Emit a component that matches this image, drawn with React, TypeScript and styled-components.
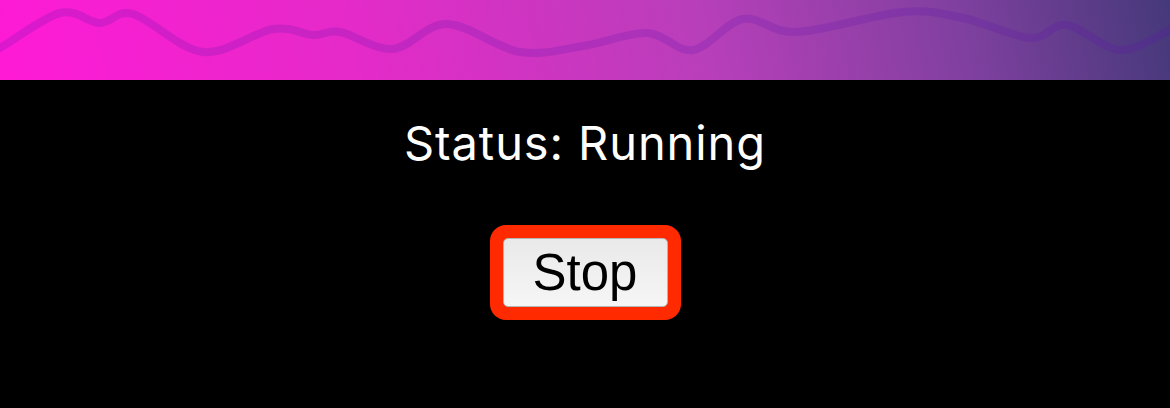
import React from "react";
import styled, { createGlobalStyle } from "styled-components";

const GlobalStyle = createGlobalStyle`
  html, body {
    margin: 0;
    padding: 0;
    background: #000;
  }
  body {
    font-family: Inter, "Noto Sans", sans-serif;
  }
`;

const Page = styled.div`
  width: 1170px;
  height: 408px;
  background: #000;
  display: flex;
  flex-direction: column;
  overflow: hidden;
`;

const Header = styled.header`
  height: 80px;
  flex: 0 0 80px;
  background: linear-gradient(78deg, #ff1ad6 0%, #e52ac9 30%, #b83fba 60%, #7f409f 82%, #45397a 100%);
  overflow: hidden;
`;

const Wave = styled.svg`
  display: block;
  width: 1170px;
  height: 80px;
`;

const Main = styled.main`
  display: flex;
  flex-direction: column;
  align-items: center;
  padding-top: 36px;
`;

const Status = styled.div`
  color: #fff;
  font-family: Inter, "Noto Sans", sans-serif;
  font-size: 47px;
  letter-spacing: 0.9px;
  line-height: 54px;
  font-weight: 400;
`;

const FocusRing = styled.div`
  margin-top: 55px;
  padding: 13px;
  background: #ff2a00;
  border-radius: 16px;
  display: flex;
`;

const Button = styled.button`
  font-family: "Liberation Sans", Arial, sans-serif;
  font-size: 51px;
  line-height: 51px;
  color: #000;
  width: 165px;
  height: 69px;
  padding: 0;
  border: 1px solid #b5b5b5;
  border-radius: 5px;
  background: linear-gradient(to bottom, #e9e9e9, #f6f6f6);
  display: flex;
  align-items: center;
  justify-content: center;
`;

const points: [number, number][] = [
  [-20, 58], [0, 48], [60, 13], [100, 23], [133, 14], [203, 52], [273, 29], [313, 35],
  [340, 32], [393, 49], [447, 24], [520, 52], [583, 46], [647, 33], [693, 50],
  [743, 19], [797, 32], [903, 12], [963, 18], [1030, 38], [1067, 25], [1120, 50],
  [1170, 30], [1190, 22],
];

function buildPath(pts: [number, number][]): string {
  let d = `M${pts[0][0]},${pts[0][1]}`;
  for (let i = 0; i < pts.length - 1; i++) {
    const p0 = pts[i - 1] || pts[i];
    const p1 = pts[i];
    const p2 = pts[i + 1];
    const p3 = pts[i + 2] || p2;
    const c1x = p1[0] + (p2[0] - p0[0]) / 6;
    const c1y = p1[1] + (p2[1] - p0[1]) / 6;
    const c2x = p2[0] - (p3[0] - p1[0]) / 6;
    const c2y = p2[1] - (p3[1] - p1[1]) / 6;
    d += ` C${c1x.toFixed(1)},${c1y.toFixed(1)} ${c2x.toFixed(1)},${c2y.toFixed(1)} ${p2[0]},${p2[1]}`;
  }
  return d;
}

export default function App() {
  const d = buildPath(points);
  return (
    <>
      <GlobalStyle />
      <Page>
        <Header>
          <Wave viewBox="0 0 1170 80" xmlns="http://www.w3.org/2000/svg">
            <path d={d} fill="none" stroke="rgba(95, 20, 175, 0.22)" strokeWidth={8} strokeLinecap="round" />
          </Wave>
        </Header>
        <Main>
          <Status>Status: Running</Status>
          <FocusRing>
            <Button>Stop</Button>
          </FocusRing>
        </Main>
      </Page>
    </>
  );
}
